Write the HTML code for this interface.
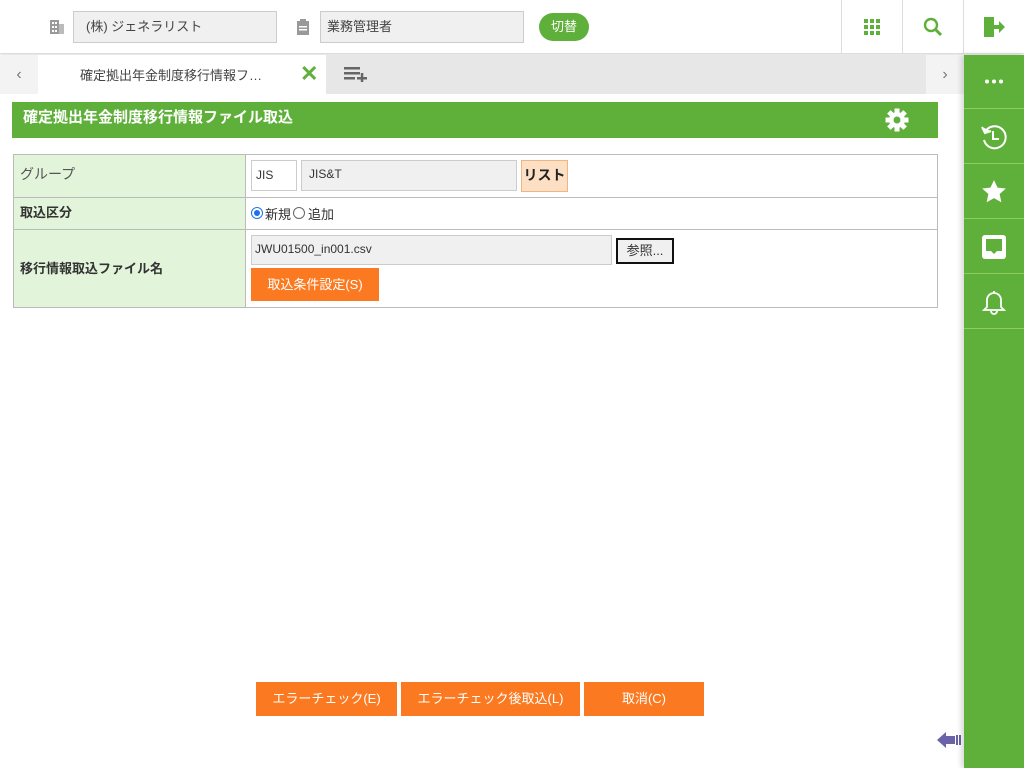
<!DOCTYPE html>
<html><head><meta charset="utf-8"><style>
*{box-sizing:border-box;margin:0;padding:0}
body{width:1024px;height:768px;position:relative;overflow:hidden;background:#fff;font-family:"Liberation Sans","Noto Sans CJK JP",sans-serif;font-size:13px;color:#333}
.abs{position:absolute}
.inp{position:absolute;background:#f0f0f0;border:1px solid #ccc;font-size:13px;padding-left:8px;padding-bottom:3px;display:flex;align-items:center}
.btn{position:absolute;background:#fb7a21;color:#fff;display:flex;align-items:center;justify-content:center;font-size:13px;padding-bottom:3px}
.side{position:absolute;left:964px;width:60px;height:54px;border-bottom:1px solid #8ccd66;display:flex;align-items:center;justify-content:center}
td{border:1px solid #bbb}
</style></head><body>
<div class="abs" style="left:0;top:0;width:1024px;height:54px;border-bottom:1px solid #ddd;box-shadow:0 1px 3px rgba(0,0,0,.15)"></div>
<svg class="abs" style="left:49px;top:19px" width="16" height="16"><rect x="1" y="1" width="9" height="14" fill="#999"/><rect x="10" y="5" width="5" height="10" fill="#bbb"/><g fill="#fff"><rect x="3" y="3" width="2" height="2"/><rect x="6" y="3" width="2" height="2"/><rect x="3" y="7" width="2" height="2"/><rect x="6" y="7" width="2" height="2"/><rect x="3" y="11" width="2" height="2"/><rect x="6" y="11" width="2" height="2"/></g></svg>
<div class="inp" style="left:73px;top:11px;width:204px;height:32px;padding-left:12px;color:#444">(株) ジェネラリスト</div>
<svg class="abs" style="left:296px;top:19px" width="14" height="17"><rect x="1" y="2" width="12" height="14" fill="#999"/><rect x="4" y="0" width="6" height="4" fill="#999"/><g fill="#fff"><rect x="3" y="7" width="8" height="1.5"/><rect x="3" y="10" width="8" height="1.5"/></g></svg>
<div class="inp" style="left:320px;top:11px;width:204px;height:32px;padding-left:6px;color:#444">業務管理者</div>
<div class="abs" style="left:539px;top:13px;width:50px;height:28px;background:#5fb03a;border-radius:14px;color:#fff;display:flex;align-items:center;justify-content:center;padding-bottom:3px">切替</div>
<div class="abs" style="left:841px;top:0;width:1px;height:54px;background:#ddd"></div>
<div class="abs" style="left:902px;top:0;width:1px;height:54px;background:#ddd"></div>
<div class="abs" style="left:963px;top:0;width:1px;height:54px;background:#ddd"></div>
<svg class="abs" style="left:864px;top:19px" width="16" height="16" fill="#5fb03a"><rect x="0" y="0" width="4" height="4"/><rect x="6" y="0" width="4" height="4"/><rect x="12" y="0" width="4" height="4"/><rect x="0" y="6" width="4" height="4"/><rect x="6" y="6" width="4" height="4"/><rect x="12" y="6" width="4" height="4"/><rect x="0" y="12" width="4" height="4"/><rect x="6" y="12" width="4" height="4"/><rect x="12" y="12" width="4" height="4"/></svg>
<svg class="abs" style="left:923px;top:17px" width="20" height="20"><circle cx="8" cy="8" r="6" fill="none" stroke="#5fb03a" stroke-width="2.4"/><path d="M12 12l6 6" stroke="#5fb03a" stroke-width="3"/></svg>
<svg class="abs" style="left:984px;top:17px" width="22" height="20" fill="#5fb03a"><path d="M0 0h10v3H4v14h6v3H0z"/><path d="M3 1l7 2v17l-7-3z"/><path d="M10 8h5V4l6 6-6 6v-4h-5z"/></svg>
<div class="abs" style="left:0;top:55px;width:964px;height:39px;background:#e7e7e7"></div>
<div class="abs" style="left:0;top:55px;width:38px;height:39px;background:#f3f3f3;color:#777;font-size:16px;display:flex;align-items:center;justify-content:center">‹</div>
<div class="abs" style="left:926px;top:55px;width:38px;height:39px;background:#f3f3f3;color:#777;font-size:16px;display:flex;align-items:center;justify-content:center">›</div>
<div class="abs" style="left:38px;top:55px;width:288px;height:39px;background:#fff"></div>
<div class="abs" style="left:80px;top:65px;font-size:13px;color:#444">確定拠出年金制度移行情報フ…</div>
<div class="abs" style="left:300px;top:61px;font-size:22px;font-weight:bold;color:#5fb03a">✕</div>
<svg class="abs" style="left:344px;top:66px" width="24" height="16" fill="#666"><rect x="0" y="1" width="16" height="2.5"/><rect x="0" y="6" width="16" height="2.5"/><rect x="0" y="11" width="11" height="2.5"/><rect x="13" y="11" width="10" height="2.5"/><rect x="16.8" y="7" width="2.5" height="10"/></svg>
<div class="abs" style="left:12px;top:102px;width:926px;height:36px;background:#5fb03a;color:#fff;font-weight:bold;font-size:15px;padding-left:11px;line-height:32px">確定拠出年金制度移行情報ファイル取込</div>
<svg class="abs" style="left:885px;top:108px" width="24" height="24" viewBox="0 0 24 24"><g fill="#fff"><circle cx="12" cy="12" r="8"/><g id="t"><rect x="9.5" y="0.5" width="5" height="6"/><rect x="9.5" y="17.5" width="5" height="6"/></g><use href="#t" transform="rotate(45 12 12)"/><use href="#t" transform="rotate(90 12 12)"/><use href="#t" transform="rotate(135 12 12)"/></g><circle cx="12" cy="12" r="3.5" fill="#5fb03a"/></svg>
<table class="abs" style="left:13px;top:154px;width:925px;border-collapse:collapse">
<tr style="height:43px"><td style="width:232px;background:#e2f4da;padding-left:6px;padding-bottom:4px;color:#555;font-size:14px">グループ</td><td></td></tr>
<tr style="height:32px"><td style="background:#e2f4da;padding-left:6px;padding-bottom:4px;font-weight:bold;font-size:13px">取込区分</td><td></td></tr>
<tr style="height:78px"><td style="background:#e2f4da;padding-left:6px;padding-bottom:3px;font-weight:bold;font-size:13px">移行情報取込ファイル名</td><td></td></tr>
</table>
<div class="abs" style="left:251px;top:160px;width:46px;height:31px;border:1px solid #ccc;background:#fff;font-size:12px;padding:7px 0 0 4px">JIS</div>
<div class="inp" style="left:301px;top:160px;width:216px;height:31px;font-size:12px;padding-left:7px">JIS&amp;T</div>
<div class="abs" style="left:521px;top:160px;width:47px;height:32px;background:#fde0c4;border:1px solid #f0b585;font-weight:bold;font-size:14px;color:#222;display:flex;align-items:center;justify-content:center;padding-bottom:3px">リスト</div>
<div class="abs" style="left:251px;top:207px;width:12px;height:12px;border-radius:50%;border:1px solid #1a73e8;background:#fff"><div style="margin:2px;width:6px;height:6px;border-radius:50%;background:#1a73e8"></div></div>
<div class="abs" style="left:265px;top:204px;font-size:13px;color:#333">新規</div>
<div class="abs" style="left:293px;top:207px;width:12px;height:12px;border-radius:50%;border:1px solid #666;background:#fff"></div>
<div class="abs" style="left:308px;top:204px;font-size:13px;color:#333">追加</div>
<div class="inp" style="left:251px;top:235px;width:361px;height:30px;font-size:12px;padding-left:3px">JWU01500_in001.csv</div>
<div class="abs" style="left:616px;top:238px;width:58px;height:26px;border:2px solid #111;background:#f0f0f0;font-size:13px;display:flex;align-items:center;justify-content:center;padding-bottom:3px">参照...</div>
<div class="btn" style="left:251px;top:268px;width:128px;height:33px">取込条件設定(S)</div>
<div class="btn" style="left:256px;top:682px;width:141px;height:34px">エラーチェック(E)</div>
<div class="btn" style="left:401px;top:682px;width:179px;height:34px">エラーチェック後取込(L)</div>
<div class="btn" style="left:584px;top:682px;width:120px;height:34px">取消(C)</div>
<svg class="abs" style="left:937px;top:730px" width="26" height="20" fill="#6a63a8"><path d="M0 10l9-8v4h9v8H9v4z"/><rect x="19" y="5" width="2" height="10"/><rect x="22" y="5" width="2" height="10"/></svg>
<div class="abs" style="left:964px;top:55px;width:60px;height:713px;background:#5fb03a;box-shadow:-3px 0 5px rgba(0,0,0,.15)"></div>
<div class="side" style="top:55px"><svg width="18" height="5" fill="#fff"><circle cx="2" cy="2.5" r="2"/><circle cx="9" cy="2.5" r="2"/><circle cx="16" cy="2.5" r="2"/></svg></div>
<div class="side" style="top:110px"><svg width="28" height="28" viewBox="0 0 28 28" fill="none" stroke="#fff" stroke-width="2"><path d="M5 9A11 11 0 1 1 4 17"/><path d="M2 4l3 6 6-2" fill="#fff"/><path d="M13 8v8h6"/></svg></div>
<div class="side" style="top:165px"><svg width="26" height="26" viewBox="0 0 24 24" fill="#fff"><path d="M12 1l3.3 7 7.6.8-5.7 5.1 1.6 7.6L12 17.6 5.2 21.5l1.6-7.6L1.1 8.8l7.6-.8z"/></svg></div>
<div class="side" style="top:220px"><svg width="26" height="26" viewBox="0 0 26 26"><rect x="1" y="1" width="24" height="24" rx="3" fill="#fff"/><path d="M5 5h16v12h-5l-3 3-3-3H5z" fill="#5fb03a"/></svg></div>
<div class="side" style="top:275px"><svg width="26" height="28" viewBox="0 0 26 28" fill="none" stroke="#fff" stroke-width="1.8"><path d="M13 3v2M6 19V12a7 7 0 0 1 14 0v7l3 3H3z"/><path d="M10 23a3 3 0 0 0 6 0"/></svg></div>
</body></html>
